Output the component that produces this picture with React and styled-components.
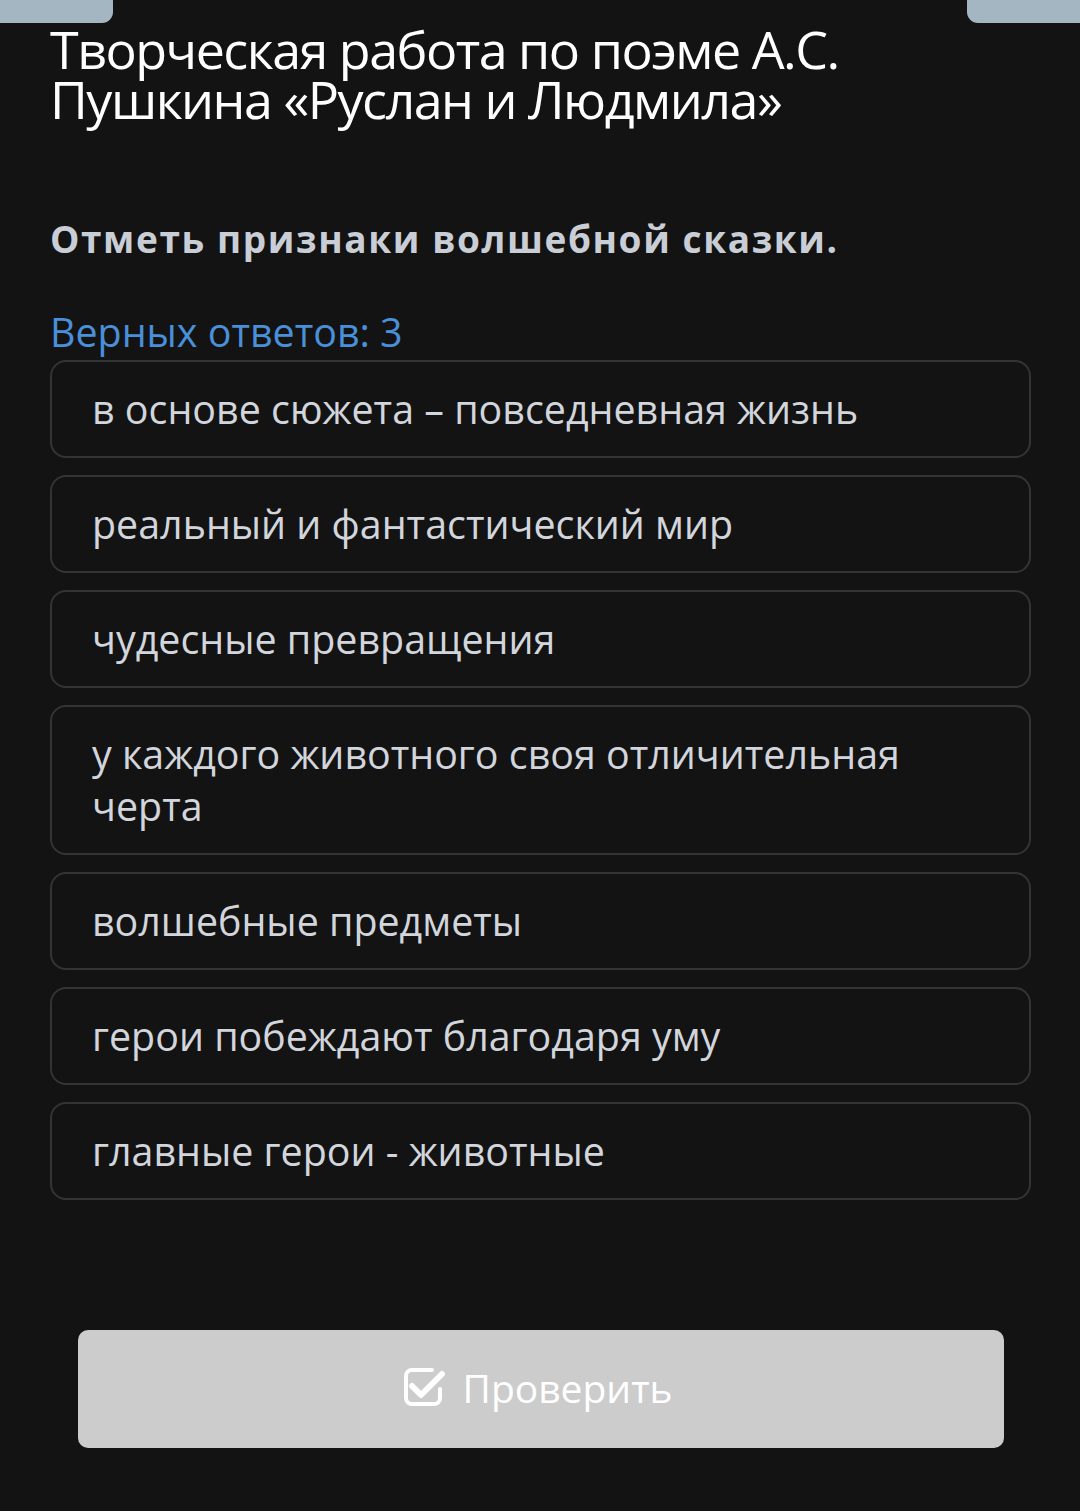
import React from "react";
import styled, { createGlobalStyle } from "styled-components";

const GlobalStyle = createGlobalStyle`
  html, body {
    margin: 0;
    padding: 0;
    background: #131313;
  }
  body {
    font-family: "Open Sans", "Noto Sans", sans-serif;
  }
`;

const Page = styled.div`
  min-height: 1511px;
  background: #131313;
  padding: 0 49px 0 50px;
  box-sizing: border-box;
`;

const TopTabs = styled.div`
  display: flex;
  justify-content: space-between;
  height: 23px;
  margin: 0 -49px 0 -50px;
`;

const Tab = styled.div`
  width: 113px;
  height: 23px;
  background: #a4b6c2;
  border-bottom-left-radius: ${p => (p.right ? "11px" : "0")};
  border-bottom-right-radius: ${p => (p.right ? "0" : "11px")};
`;

const Title = styled.h1`
  margin: 1px 0 0;
  font-size: 52px;
  line-height: 50px;
  font-weight: 400;
  letter-spacing: -1.5px;
  color: #ffffff;
`;

const Question = styled.h2`
  margin: 90px 0 0;
  font-size: 37px;
  line-height: 50px;
  font-weight: 700;
  letter-spacing: 1.6px;
  color: #c9ced6;
`;

const Counter = styled.div`
  margin-top: 43px;
  font-size: 39.4px;
  line-height: 50px;
  color: #4a8fd9;
`;

const Options = styled.div`
  display: flex;
  flex-direction: column;
  gap: 17px;
  margin-top: 3px;
`;

const Option = styled.div`
  border: 2px solid #333436;
  border-radius: 16px;
  padding: 21px 40px;
  font-size: 39.4px;
  line-height: 52px;
  color: #d2d6dc;
`;

const CheckButton = styled.button`
  display: flex;
  align-items: center;
  justify-content: center;
  gap: 16px;
  width: 926px;
  height: 118px;
  margin: 130px auto 0;
  border: none;
  border-radius: 10px;
  background: #cccccc;
  color: #ffffff;
  font-family: "Open Sans", sans-serif;
  font-size: 39px;
  padding: 0 4px 4px 0;
`;

const CheckIcon = () => (
  <svg width="42" height="40" viewBox="0 0 42 40" fill="none">
    <path
      d="M28 3H8a6 6 0 0 0-6 6v22a6 6 0 0 0 6 6h22a6 6 0 0 0 6-6V22"
      stroke="#fff"
      strokeWidth="4"
      strokeLinecap="round"
    />
    <path
      d="M8 19l9 9L38 7"
      stroke="#fff"
      strokeWidth="6"
      strokeLinecap="round"
      strokeLinejoin="round"
    />
  </svg>
);

const answers = [
  "в основе сюжета – повседневная жизнь",
  "реальный и фантастический мир",
  "чудесные превращения",
  "у каждого животного своя отличительная черта",
  "волшебные предметы",
  "герои побеждают благодаря уму",
  "главные герои - животные",
];

export default function App() {
  return (
    <Page>
      <GlobalStyle />
      <TopTabs>
        <Tab />
        <Tab right />
      </TopTabs>
      <Title>
        Творческая работа по поэме А.С.
        <br />
        Пушкина «Руслан и Людмила»
      </Title>
      <Question>Отметь признаки волшебной сказки.</Question>
      <Counter>Верных ответов: 3</Counter>
      <Options>
        {answers.map(a => (
          <Option key={a}>{a}</Option>
        ))}
      </Options>
      <CheckButton>
        <CheckIcon />
        Проверить
      </CheckButton>
    </Page>
  );
}
